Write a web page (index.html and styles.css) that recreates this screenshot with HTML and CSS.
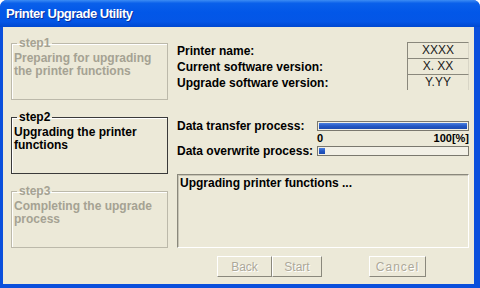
FILE: index.html
```html
<!DOCTYPE html>
<html lang="en">
<head>
    <meta charset="UTF-8">
    <title>Printer Upgrade Utility</title>
    <link rel="stylesheet" href="styles.css">
</head>
<body>
    <div class="window">
        <div class="titlebar">Printer Upgrade Utility</div>

        <div class="client">
            <div class="steps">
                <fieldset class="step disabled">
                    <legend>step1</legend>
                    Preparing for upgrading the printer functions
                </fieldset>
                <fieldset class="step active">
                    <legend>step2</legend>
                    Upgrading the printer functions
                </fieldset>
                <fieldset class="step disabled">
                    <legend>step3</legend>
                    Completing the upgrade process
                </fieldset>
            </div>

            <div class="main">
                <div class="info">
                    <div class="info-label">Printer name:</div>
                    <div class="info-value">XXXX</div>
                    <div class="info-label">Current software version:</div>
                    <div class="info-value">X. XX</div>
                    <div class="info-label">Upgrade software version:</div>
                    <div class="info-value">Y.YY</div>
                </div>

                <div class="progress">
                    <div class="progress-row">
                        <span class="progress-label">Data transfer process:</span>
                        <div class="bar"><div class="bar-fill" style="width: 100%"></div></div>
                    </div>
                    <div class="scale">
                        <span>0</span>
                        <span>100[%]</span>
                    </div>
                    <div class="progress-row">
                        <span class="progress-label">Data overwrite process:</span>
                        <div class="bar"><div class="bar-fill" style="width: 4%"></div></div>
                    </div>
                </div>

                <div class="message">Upgrading printer functions ...</div>

                <div class="buttons">
                    <button class="btn btn-back" disabled>Back</button>
                    <button class="btn btn-start" disabled>Start</button>
                    <button class="btn btn-cancel" disabled>Cancel</button>
                </div>
            </div>
        </div>
    </div>
</body>
</html>
```

FILE: styles.css
```css
body {
    margin: 0;
    background-color: #ffffff;
    font-family: "Liberation Sans", Arial, sans-serif;
}

.window {
    width: 480px;
    height: 288px;
    display: flex;
    flex-direction: column;
    background-color: #0a4fdc;
    border-radius: 7px 7px 0 0;
    overflow: hidden;
}

.titlebar {
    height: 27px;
    flex-shrink: 0;
    display: flex;
    align-items: center;
    padding-left: 6px;
    color: white;
    font-size: 13px;
    font-weight: bold;
    letter-spacing: -0.5px;
    text-shadow: 1px 1px 0 #0b2f9c;
    background: linear-gradient(to bottom, #3c8cf4 0%, #0a60ea 12%, #0257e8 45%, #0456e6 80%, #0048d0 100%);
}

.client {
    flex: 1;
    display: flex;
    gap: 9px;
    margin: 0 6px 4px 3px;
    padding: 10px 5px 0 8px;
    background-color: #ECE9D8;
    font-size: 12px;
    font-weight: bold;
}

/* Step frames on the left */
.steps {
    width: 157px;
    display: flex;
    flex-direction: column;
    gap: 11px;
}

.step {
    box-sizing: border-box;
    height: 63px;
    margin: 0;
    padding: 2px 2px 0 2px;
    line-height: 13px;
}

.step legend {
    margin-left: 3px;
    padding: 0 2px;
    line-height: 13px;
}

.step.disabled {
    color: #a5a293;
    border: 1px solid #bcb9aa;
    box-shadow: inset 1px 1px 0 #ffffff;
}

.step.active {
    color: #000;
    border: 1px solid #3a3a3a;
    box-shadow: inset 1px 1px 0 #ffffff;
}

/* Right side */
.main {
    flex: 1;
    display: flex;
    flex-direction: column;
    padding-top: 5px;
}

.info {
    display: grid;
    grid-template-columns: 1fr 62px;
    grid-auto-rows: 16px;
    align-items: center;
}

.info-label {
    padding-top: 2px;
}

.info-value {
    box-sizing: border-box;
    height: 16px;
    border-top: 1px solid #8a887c;
    border-left: 1px solid #8a887c;
    border-right: 1px solid #d8d5c6;
    text-align: center;
    font-weight: normal;
    line-height: 15px;
    color: #1a1a1a;
}

.progress {
    margin-top: 31px;
}

.progress-row {
    display: flex;
    align-items: center;
    height: 10px;
}

.progress-label {
    width: 140px;
}

.bar {
    flex: 1;
    box-sizing: border-box;
    height: 10px;
    padding: 1px;
    border: 1px solid #7a786e;
    background-color: #f2f0e6;
}

.bar-fill {
    height: 100%;
    background: linear-gradient(to bottom, #4b7fe0, #2458c4 50%, #1c4ab0);
}

.scale {
    display: flex;
    justify-content: space-between;
    margin-left: 140px;
    height: 15px;
    font-size: 11px;
    line-height: 15px;
}

.message {
    box-sizing: border-box;
    height: 74px;
    margin-top: 18px;
    padding: 2px 2px;
    border: 1px solid;
    border-color: #8a887c #ffffff #ffffff #8a887c;
    box-shadow: inset 1px 1px 0 #c8c5b6;
    line-height: 13px;
    color: #000;
}

.buttons {
    display: flex;
    margin-top: 8px;
    padding-left: 40px;
}

.btn {
    height: 21px;
    padding: 0;
    font-family: "Liberation Sans", Arial, sans-serif;
    font-size: 12px;
    color: #aca899;
    text-shadow: 1px 1px 0 #ffffff;
    background-color: #ECE9D8;
    border: 1px solid;
    border-color: #ffffff #8a887c #8a887c #ffffff;
}

.btn-back {
    width: 55px;
}

.btn-start {
    width: 50px;
}

.btn-cancel {
    width: 57px;
    margin-left: 47px;
    letter-spacing: 1px;
}
```
